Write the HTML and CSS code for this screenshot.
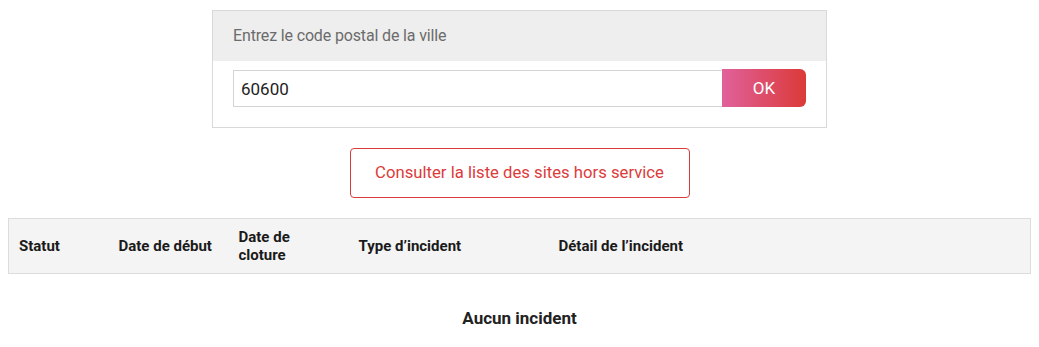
FILE: index.html
```html
<!DOCTYPE html>
<html lang="fr">

<head>
  <meta charset="UTF-8">
  <meta name="viewport" content="width=device-width, initial-scale=1.0">
  <title>Sites hors service</title>
  <link rel="stylesheet" href="styles.css">
</head>

<body>
  <div class="search-box">
    <div class="search-title">Entrez le code postal de la ville</div>
    <form class="search-form">
      <input class="search-input" type="text" value="60600">
      <button class="search-btn" type="button">OK</button>
    </form>
  </div>

  <div class="list-wrap">
    <a class="list-btn" href="#">Consulter la liste des sites hors service</a>
  </div>

  <table class="incidents">
    <colgroup>
      <col class="col-statut">
      <col class="col-debut">
      <col class="col-fin">
      <col class="col-type">
      <col>
    </colgroup>
    <thead>
      <tr>
        <th>Statut</th>
        <th>Date de début</th>
        <th>Date de cloture</th>
        <th>Type d’incident</th>
        <th>Détail de l’incident</th>
      </tr>
    </thead>
  </table>

  <p class="empty">Aucun incident</p>
</body>

</html>
```

FILE: styles.css
```css
:root {
  --red: #dc3b3b;
  --border: #d9d9d9;
}

body {
  margin: 8px;
  font-family: "Roboto", sans-serif;
  color: #222;
  background: #fff;
}

.search-box {
  width: 613px;
  margin: 2px auto 0;
  border: 1px solid var(--border);
}

.search-title {
  height: 50px;
  line-height: 50px;
  padding: 0 20px;
  background: #eee;
  color: #6b6b6b;
  font-size: 16px;
  letter-spacing: -0.15px;
}

.search-form {
  display: flex;
  padding: 8px 20px 20px;
  margin: 0;
}

.search-input {
  flex: 1;
  height: 37px;
  margin-top: 1px;
  box-sizing: border-box;
  border: 1px solid #d4d4d4;
  border-right: 0;
  padding: 0 7px;
  font-family: inherit;
  font-size: 17px;
  color: #222;
  outline: none;
}

.search-btn {
  width: 84px;
  height: 38px;
  border: 0;
  border-radius: 0 6px 6px 0;
  background: linear-gradient(to right, #e0619b, #db3a38);
  color: #fff;
  font-family: inherit;
  font-size: 17px;
  cursor: pointer;
}

.list-wrap {
  display: flex;
  justify-content: center;
  margin: 20px 0;
}

.list-btn {
  display: block;
  width: 338px;
  height: 48px;
  line-height: 48px;
  text-align: center;
  border: 1px solid var(--red);
  border-radius: 4px;
  color: var(--red);
  font-size: 16.7px;
  text-decoration: none;
}

.incidents {
  width: 100%;
  table-layout: fixed;
  border-collapse: collapse;
  background: #f4f4f4;
  border: 1px solid #dcdcdc;

  & th {
    padding: 9px 10px 9px 10px;
    height: 36px;
    text-align: left;
    font-size: 15px;
    font-weight: bold;
    line-height: 18px;
    color: #1a1a1a;
  }
}

.col-statut {
  width: 100px;
}

.col-debut,
.col-fin {
  width: 120px;
}

.col-type {
  width: 200px;
}

.empty {
  margin: 34px 0 0;
  text-align: center;
  font-size: 17px;
  font-weight: bold;
}
```
